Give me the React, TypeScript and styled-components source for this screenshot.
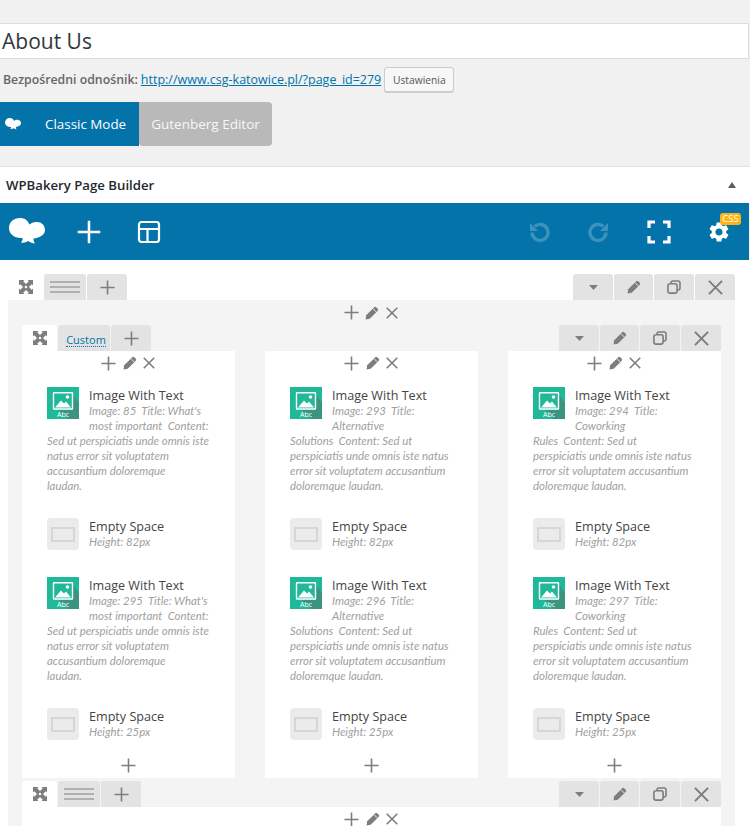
import React from 'react';
import styled, { createGlobalStyle } from 'styled-components';
import { MdSettings } from 'react-icons/md';

const Global = createGlobalStyle`
  html, body { margin: 0; padding: 0; height: 826px; overflow: hidden; background: #f1f1f1; }
  body { font-family: "Open Sans", "Noto Sans", sans-serif; color: #444; }
  * { box-sizing: border-box; }
`;

const Page = styled.div`width: 750px; height: 826px; overflow: hidden; padding-top: 23px;`;
const TitleInput = styled.div`
  width: 749px; height: 36px; background: #fff; border: 1px solid #ddd; border-left: 0;
  font-size: 21px; line-height: 34px; padding-left: 2px; color: #32373c;
`;
const Permalink = styled.div`
  display: flex; align-items: center; height: 25px; margin-top: 8px; padding-left: 3px;
  color: #666;
  b { font-size: 12.3px; font-weight: 600; margin-right: 3px; }
  a { font-size: 12.5px; color: #0073aa; text-decoration: underline; margin-right: 3px; }
`;
const SmallButton = styled.button`
  width: 70px; height: 25px; padding: 0; border: 1px solid #ccc; border-radius: 3px; background: #f7f7f7;
  box-shadow: 0 1px 0 #ccc; font: 10.3px "Open Sans", sans-serif; color: #555;
`;
const ModeRow = styled.div`display: flex; margin-top: 10px; height: 44px;`;
const ClassicMode = styled.div`
  width: 139px; background: #0473aa; color: #fff; display: flex; align-items: center;
  font-size: 13.4px; padding-left: 5px; gap: 24px;
`;
const GutenbergMode = styled.div`
  width: 133px; background: #b9b9b9; color: #f7f7f7; border-radius: 0 4px 4px 4px;
  display: flex; align-items: center; justify-content: center; font-size: 13.5px;
`;
const BoxHeader = styled.div`
  margin-top: 20px; height: 37px; background: #fff; border-top: 1px solid #e3e3e3;
  display: flex; align-items: center; justify-content: space-between; padding: 0 14px 1px 6px;
  font-size: 13.2px; font-weight: 600; color: #23282d;
`;
const Caret = styled.span`
  width: 0; height: 0; border-left: 4px solid transparent; border-right: 4px solid transparent;
  border-bottom: 6px solid #555d66;
`;
const Toolbar = styled.div`
  width: 749px; height: 57px; background: #0473aa; display: flex; align-items: center; padding-left: 9px;
`;
const ToolIcon = styled.div<{ $w: number; $dim?: boolean; $ml?: number }>`
  width: ${p => p.$w}px; display: flex; justify-content: center; position: relative; flex: none;
  margin-left: ${p => p.$ml ?? 0}px; color: #fff; opacity: ${p => (p.$dim ? 0.22 : 1)};
`;
const CssBadge = styled.span`
  position: absolute; top: -6px; left: 13px; width: 21px; height: 12px; border-radius: 3px;
  background: #fdb415; color: #fff; font-size: 9.5px; line-height: 12px; text-align: center;
`;
const Canvas = styled.div`background: #fff; height: 566px; padding: 14px 15px 0 8px; overflow: hidden;`;
const Tabs = styled.div`display: flex; justify-content: space-between; height: 26px;`;
const TabGroup = styled.div`display: flex; gap: 1px;`;
const Tab = styled.div<{ $w: number; $active?: boolean }>`
  width: ${p => p.$w}px; height: 26px; display: flex; align-items: center; justify-content: center;
  background: ${p => (p.$active ? '#fff' : '#e3e3e3')}; color: #7d7d7d;
  border-radius: 3px 3px 0 0;
`;
const CustomLabel = styled.span`
  color: #0473aa; font-size: 11px; line-height: 13px; border-bottom: 1px dotted #0473aa;
  margin: 4px 0 0 4px;
`;
const RowBody = styled.div`background: #f4f4f4; padding: 0 14px; height: 526px;`;
const Controls = styled.div`
  height: 25px; display: flex; align-items: center; justify-content: center; gap: 6.5px; color: #7d7d7d;
  padding-right: 2px;
`;
const Columns = styled.div`display: grid; grid-template-columns: repeat(3, 213px); column-gap: 30px; height: 426px;`;
const Column = styled.div`background: #fff; display: flex; flex-direction: column;`;
const ColumnTop = styled.div`
  height: 24px; display: flex; align-items: center; justify-content: center; gap: 6.5px; color: #7d7d7d;
  padding-right: 1px;
`;
const ElementList = styled.div`padding: 12px 25px 0; display: flex; flex-direction: column; flex: 1;`;
const ImageElement = styled.div`height: 131px; display: flow-root;`;
const SpaceElement = styled.div<{ $h: number }>`height: ${p => p.$h}px; display: flow-root;`;
const ElementIcon = styled.div`float: left; width: 32px; height: 32px; margin: 0 10px 8px 0;`;
const ElementTitle = styled.div`font-size: 12.6px; font-weight: 500; line-height: 15px; padding-top: 1px; color: #444;`;
const ElementDesc = styled.div`
  font-family: "Lato", "Open Sans", sans-serif; font-style: italic; font-size: 11.4px; line-height: 15px; color: #a0a0a0;
  white-space: pre;
`;
const ColumnFoot = styled.div`height: 24px; margin-top: auto; padding-bottom: 2px; display: flex; justify-content: center; align-items: center; color: #7d7d7d;`;
const InnerGap = styled.div`height: 4px;`;
const RowSecond = styled.div`background: #fff;`;
const UndoSvg = styled.svg<{ $flip?: boolean }>`
  transform: ${p => (p.$flip ? 'scaleX(-1)' : 'none')};
`;

const Plus = ({ s = 15 }: { s?: number }) => (
  <svg width={s} height={s} viewBox="0 0 16 16"><path d="M8 0.500v15M0.500 8h15" stroke="currentColor" strokeWidth="1.700" /></svg>
);
const Pencil = () => (
  <svg width="14" height="14" viewBox="0 0 14 14">
    <path d="M0.500 13.500l0.700-4.200L9 1.400a1.700 1.700 0 0 1 2.400 0l1.200 1.200a1.700 1.700 0 0 1 0 2.400L4.700 12.800z" fill="currentColor" />
    <path d="M8 2.700l3.300 3.300" stroke="#fff" strokeWidth="0.800" />
  </svg>
);
const Cross = ({ s = 12 }: { s?: number }) => (
  <svg width={s} height={s} viewBox="0 0 13 13"><path d="M0.800 0.800l11.400 11.400M12.200 0.800L0.800 12.200" stroke="currentColor" strokeWidth="1.700" /></svg>
);
const Copy = () => (
  <svg width="14" height="14" viewBox="0 0 14 14" fill="none" stroke="currentColor" strokeWidth="1.600">
    <rect x="0.900" y="3.700" width="9.200" height="9.400" rx="2" />
    <path d="M4 3.600V3a2 2 0 0 1 2-2h5a2 2 0 0 1 2 2v5a2 2 0 0 1-2 2h-0.800" />
  </svg>
);
const Down = () => (
  <svg width="9" height="5" viewBox="0 0 9 5"><path d="M0 0h9L4.500 5z" fill="currentColor" /></svg>
);
const Lines = () => (
  <svg width="30" height="14" viewBox="0 0 30 14"><path d="M0 2h30M0 7h30M0 12h30" stroke="#a0a0a0" strokeWidth="1.700" /></svg>
);
const Expand = () => (
  <svg width="14" height="14" viewBox="0 0 14 14" fill="currentColor">
    <path d="M0 0h5.500L4.200 1.300 7 4 9.800 1.300 8.500 0H14v5.500L12.700 4.200 10 7l2.700 2.800L14 8.500V14H8.500l1.300-1.300L7 10l-2.800 2.700L5.500 14H0V8.500l1.300 1.300L4 7 1.300 4.200 0 5.500z" />
    <path d="M7 5.400L8.600 7 7 8.600 5.400 7z" fill="#fff" />
  </svg>
);
const Cloud = ({ w, h }: { w: number; h: number }) => (
  <svg width={w} height={h} viewBox="0 0 36 27" fill="#fff">
    <path d="M11 0C4.500 0 0 4.200 0 10c0 5.500 4.500 9.300 10.500 10 1 0 2 0 3 0 0.500 1.500-0.500 3.500-1.500 4.500 3 0.500 5 0 7-1.500 2.500 1.500 4.500 2.500 7 2.500-1-1-1.500-3-1.500-5 6.500-0.500 11.500-4 11.500-8.500 0-5-3.500-8-8-8-2.500 0-5 0.500-7.500 2.500C18.500 2 15.500 0 11 0z" />
  </svg>
);
const LayoutIcon = () => (
  <svg width="24" height="24" viewBox="0 0 24 24" fill="none" stroke="#fff" strokeWidth="2.200">
    <rect x="2" y="2" width="20" height="20" rx="2.500" /><path d="M2 9h20M10.500 9v13" />
  </svg>
);
const Undo = ({ flip }: { flip?: boolean }) => (
  <UndoSvg $flip={flip} width="22" height="22" viewBox="0 0 22 22" fill="none" stroke="#fff" strokeWidth="3.400">
    <path d="M4 11.500a8 8 0 1 0 2.600-6" /><path d="M2 2v8h8z" fill="#fff" stroke="none" />
  </UndoSvg>
);
const Fullscreen = () => (
  <svg width="24" height="24" viewBox="0 0 24 24" fill="none" stroke="#fff" strokeWidth="3.200">
    <path d="M2 8V2h6M16 2h6v6M22 16v6h-6M8 22H2v-6" />
  </svg>
);
const ImageTextIcon = () => (
  <svg width="32" height="32" viewBox="0 0 32 32">
    <rect width="32" height="32" fill="#1fb899" />
    <path d="M12 23h14V8l6 8v16H21z" fill="#3a9480" />
    <rect x="6.500" y="5.700" width="19" height="16.300" rx="0.500" fill="none" stroke="#fff" strokeWidth="1.400" />
    <path d="M8 20.500l6-7 3 3 2-2 5 6z" fill="#fff" /><circle cx="20.500" cy="10" r="1.800" fill="#fff" />
    <text x="16" y="30" textAnchor="middle" fontSize="7" fontFamily="Open Sans" fill="#fff">Abc</text>
  </svg>
);
const SpaceIcon = () => (
  <svg width="32" height="32" viewBox="0 0 32 32">
    <rect width="32" height="32" rx="4" fill="#ebebeb" />
    <rect x="5" y="10" width="22" height="13" fill="none" stroke="#d6d6d6" strokeWidth="2" />
  </svg>
);

const rest = 'Sed ut perspiciatis unde omnis iste\nnatus error sit voluptatem\naccusantium doloremque\nlaudan.';
const rest2 = 'perspiciatis unde omnis iste natus\nerror sit voluptatem accusantium\ndoloremque laudan.';
const desc = (col: number, id: number) => {
  if (col === 0) return `Image: ${id}  Title: What's\nmost important  Content:\n${rest}`;
  if (col === 1) return `Image: ${id}  Title:\nAlternative\nSolutions  Content: Sed ut\n${rest2}`;
  return `Image: ${id}  Title:\nCoworking\nRules  Content: Sed ut\n${rest2}`;
};
const ids = [[85, 295], [293, 296], [294, 297]];

const ImageBlock = ({ text }: { text: string }) => (
  <ImageElement>
    <ElementIcon><ImageTextIcon /></ElementIcon>
    <ElementTitle>Image With Text</ElementTitle>
    <ElementDesc>{text}</ElementDesc>
  </ImageElement>
);
const SpaceBlock = ({ h, label }: { h: number; label: string }) => (
  <SpaceElement $h={h}>
    <ElementIcon><SpaceIcon /></ElementIcon>
    <ElementTitle>Empty Space</ElementTitle>
    <ElementDesc>{label}</ElementDesc>
  </SpaceElement>
);
const RightTabs = () => (
  <TabGroup>
    <Tab $w={40}><Down /></Tab>
    <Tab $w={39}><Pencil /></Tab>
    <Tab $w={40}><Copy /></Tab>
    <Tab $w={40}><Cross s={15} /></Tab>
  </TabGroup>
);
const Trio = () => (<><Plus /><Pencil /><Cross /></>);

export default function App() {
  return (
    <Page>
      <Global />
      <TitleInput>About Us</TitleInput>
      <Permalink>
        <b>Bezpośredni odnośnik:</b>
        <a>http://www.csg-katowice.pl/?page_id=279</a>
        <SmallButton>Ustawienia</SmallButton>
      </Permalink>
      <ModeRow>
        <ClassicMode><Cloud w={16} h={12} />Classic Mode</ClassicMode>
        <GutenbergMode>Gutenberg Editor</GutenbergMode>
      </ModeRow>
      <BoxHeader>WPBakery Page Builder<Caret /></BoxHeader>
      <Toolbar>
        <ToolIcon $w={36}><Cloud w={36} h={27} /></ToolIcon>
        <ToolIcon $w={24} $ml={32}><Plus s={24} /></ToolIcon>
        <ToolIcon $w={24} $ml={36}><LayoutIcon /></ToolIcon>
        <ToolIcon $w={22} $dim $ml={367}><Undo /></ToolIcon>
        <ToolIcon $w={22} $dim $ml={38}><Undo flip /></ToolIcon>
        <ToolIcon $w={24} $ml={37}><Fullscreen /></ToolIcon>
        <ToolIcon $w={24} $ml={36}><MdSettings size={26} /><CssBadge>CSS</CssBadge></ToolIcon>
      </Toolbar>
      <Canvas>
        <Tabs>
          <TabGroup>
            <Tab $w={35} $active><Expand /></Tab>
            <Tab $w={42}><Lines /></Tab>
            <Tab $w={40}><Plus /></Tab>
          </TabGroup>
          <RightTabs />
        </Tabs>
        <RowBody>
          <Controls><Trio /></Controls>
          <Tabs>
            <TabGroup>
              <Tab $w={35} $active><Expand /></Tab>
              <Tab $w={52}><CustomLabel>Custom</CustomLabel></Tab>
              <Tab $w={40}><Plus /></Tab>
            </TabGroup>
            <RightTabs />
          </Tabs>
          <Columns>
            {ids.map((pair, col) => (
              <Column key={col}>
                <ColumnTop><Trio /></ColumnTop>
                <ElementList>
                  <ImageBlock text={desc(col, pair[0])} />
                  <SpaceBlock h={59} label="Height: 82px" />
                  <ImageBlock text={desc(col, pair[1])} />
                  <SpaceBlock h={46} label="Height: 25px" />
                </ElementList>
                <ColumnFoot><Plus /></ColumnFoot>
              </Column>
            ))}
          </Columns>
          <InnerGap />
          <Tabs>
            <TabGroup>
              <Tab $w={35} $active><Expand /></Tab>
              <Tab $w={42}><Lines /></Tab>
              <Tab $w={40}><Plus /></Tab>
            </TabGroup>
            <RightTabs />
          </Tabs>
          <RowSecond><ColumnTop><Trio /></ColumnTop></RowSecond>
        </RowBody>
      </Canvas>
    </Page>
  );
}
